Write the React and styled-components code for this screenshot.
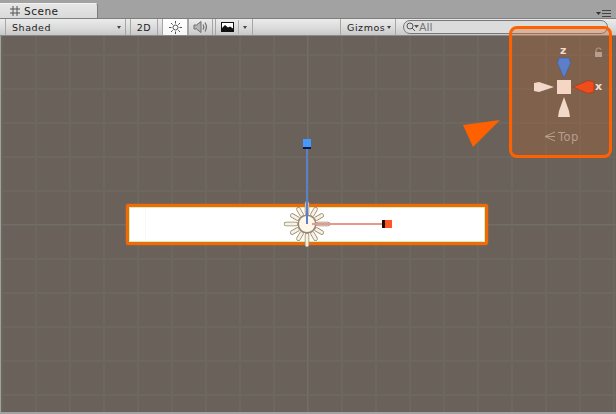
import React from 'react'
import styled, { createGlobalStyle } from 'styled-components'

const Global = createGlobalStyle`
  html, body { margin: 0; padding: 0; background: #a2a2a2; }
  body { font-family: "DejaVu Sans", sans-serif; overflow: hidden; }
`
const Window = styled.div`
  position: relative;
  width: 616px;
  height: 414px;
  display: flex;
  flex-direction: column;
  background: #a2a2a2;
  overflow: hidden;
`
const TabBar = styled.div`
  height: 18px;
  display: flex;
  align-items: flex-end;
  flex: none;
  position: relative;
`
const Tab = styled.div`
  width: 98px;
  height: 15px;
  box-sizing: border-box;
  padding-left: 9px;
  display: flex;
  align-items: center;
  gap: 3px;
  background: linear-gradient(#e6e6e6, #dadada);
  border-top: 1px solid #f2f2f2;
  border-right: 1px solid #7c7c7c;
  border-radius: 0 3px 0 0;
  font-size: 10.5px;
  letter-spacing: 0.5px;
  color: #222;
`
const PaneMenu = styled.svg`
  position: absolute;
  right: 4px;
  bottom: 1px;
`
const Toolbar = styled.div`
  height: 18px;
  flex: none;
  box-sizing: border-box;
  display: flex;
  align-items: stretch;
  padding-left: 5px;
  background: linear-gradient(#ececec, #d9d9d9 60%, #c8c8c8);
  border-top: 1px solid #7f7f7f;
  border-bottom: 1px solid #8a8a8a;
`
const ToolButton = styled.div`
  width: ${p => p.$width}px;
  margin-left: ${p => p.$gap || 0}px;
  box-sizing: border-box;
  display: flex;
  align-items: center;
  gap: ${p => p.$inner || 0}px;
  justify-content: ${p => (p.$left ? 'space-between' : 'center')};
  padding: ${p => (p.$left ? '0 4px 0 6px' : '0')};
  border-left: 1px solid #a6a6a6;
  border-right: 1px solid #a6a6a6;
  background: ${p => (p.$active ? 'linear-gradient(#ffffff, #f6f6f6)' : 'transparent')};
  font-size: 9.5px;
  letter-spacing: 0.55px;
  color: #1d1d1d;
`
const Caret = styled.span`
  width: 0;
  height: 0;
  border-left: 2.5px solid transparent;
  border-right: 2.5px solid transparent;
  border-top: 3px solid #444;
`
const CaretSplit = styled.span`
  height: 14px;
  width: 1px;
  background: #b0b0b0;
`
const Spacer = styled.div`
  flex: 1;
`
const SearchField = styled.div`
  width: 205px;
  height: 14px;
  align-self: center;
  margin: 0 8px 0 7px;
  box-sizing: border-box;
  display: flex;
  align-items: center;
  padding-left: 2px;
  border: 1px solid #777;
  border-radius: 7px;
  background: #dcdcdc;
  font-size: 11px;
  color: #777;
`
const SceneView = styled.div`
  position: relative;
  flex: 1;
  margin: 0 0 2px 1px;
  background-color: #6a625a;
  background-image:
    linear-gradient(#716d67, #716d67),
    linear-gradient(#716d67, #716d67),
    linear-gradient(90deg, #6c675f 2px, transparent 2px),
    linear-gradient(#6c675f 2px, transparent 2px);
  background-size: 1px 100%, 100% 1px, 34px 34px, 34px 34px;
  background-position: 306px 0, 0 188px, 0 18px, 0 18px;
  background-repeat: no-repeat, no-repeat, repeat, repeat;
`
const Selection = styled.div`
  position: absolute;
  left: 125px;
  top: 168px;
  width: 362px;
  height: 41px;
  box-sizing: border-box;
  border: 3px solid #f26a08;
  border-radius: 2px;
  box-shadow: inset 0 0 0 1px #cdf2b8, 0 0 2px 0 rgba(242, 106, 8, 0.8);
  background: linear-gradient(90deg, #fff 16px, #f3faf3 16px, #f3faf3 17px, #fff 17px);
`
const Handles = styled.svg`
  position: absolute;
  left: 0;
  top: 0;
`
const GizmoPanel = styled.div`
  position: absolute;
  left: 509px;
  top: 26px;
  width: 103px;
  height: 132px;
  box-sizing: border-box;
  border: 3px solid #ff6000;
  border-radius: 8px;
  background: rgba(255, 96, 0, 0.15);
`
const ToolbarTint = styled.div`
  height: 7px;
  background: rgba(190, 110, 60, 0.22);
`
const GizmoDrawing = styled.svg`
  position: absolute;
  left: -3px;
  top: -3px;
`
const AxisLabel = styled.span`
  position: absolute;
  left: ${p => p.$x}px;
  top: ${p => p.$y}px;
  font-size: 11px;
  font-weight: bold;
  line-height: 10px;
  color: #f4dccd;
`
const ViewName = styled.span`
  position: absolute;
  left: 46px;
  top: 101px;
  font-size: 11.5px;
  line-height: 14px;
  letter-spacing: 0.5px;
  color: #b89e8e;
`

const rayAngles = Array.from({ length: 12 }, (_, i) => i * 30)

function SunRays() {
  const rays = rayAngles.map(a => {
    const rad = (a * Math.PI) / 180
    const to = a % 90 === 0 ? 21 : 17
    return {
      a,
      x1: 306 + Math.cos(rad) * 11,
      y1: 188 + Math.sin(rad) * 11,
      x2: 306 + Math.cos(rad) * to,
      y2: 188 + Math.sin(rad) * to,
    }
  })
  return (
    <>
      {rays.map(({ a, ...c }) => (
        <line key={a} {...c} stroke="#8f877b" strokeWidth="4.5" strokeLinecap="round" />
      ))}
      {rays.map(({ a, ...c }) => (
        <line key={a} {...c} stroke="#fff0d8" strokeWidth="3" strokeLinecap="round" />
      ))}
    </>
  )
}

export default function App() {
  return (
    <Window>
      <Global />
      <TabBar>
        <Tab>
          <svg width="12" height="12" viewBox="0 0 12 12" stroke="#555" fill="none">
            <path d="M4 1v10M8 1v10M1 4h10M1 8h10" />
          </svg>
          Scene
        </Tab>
        <PaneMenu width="16" height="7" viewBox="0 0 16 7">
          <path d="M0 2h5L2.5 5z" fill="#333" />
          <path d="M6 .5h9M6 3.5h9M6 6.5h9" stroke="#444" />
        </PaneMenu>
      </TabBar>
      <Toolbar>
        <ToolButton $width={121} $left>Shaded<Caret /></ToolButton>
        <ToolButton $width={28} $gap={4}>2D</ToolButton>
        <ToolButton $width={26} $gap={4} $active>
          <svg width="13" height="13" viewBox="0 0 13 13" stroke="#555" fill="none">
            <circle cx="6.5" cy="6.5" r="2.5" />
            <path d="M6.5 0v2.5M6.500 10.500V13M0 6.5h2.500M10.500 6.500H13M2 2l1.700 1.700M9.300 9.300 11 11M2 11l1.700-1.700M9.300 3.700 11 2" />
          </svg>
        </ToolButton>
        <ToolButton $width={25}>
          <svg width="15" height="14" viewBox="0 0 15 14" fill="none">
            <path d="M1 5h2.500L8 1.500v11L3.500 9H1z" fill="#b5b5b5" stroke="#6f6f6f" />
            <path d="M10 4.500q1.500 2.500 0 5M12 2.500q2.800 4.500 0 9" stroke="#6f6f6f" strokeWidth="1.200" />
          </svg>
        </ToolButton>
        <ToolButton $width={38} $gap={2} $inner={4}>
          <svg width="13" height="10" viewBox="0 0 13 10">
            <rect x=".5" y=".5" width="12" height="9" fill="#fff" stroke="#111" />
            <path d="M1 9V6l3-3 3 2.500 2-1 3 2v3z" fill="#111" />
          </svg>
          <CaretSplit />
          <Caret />
        </ToolButton>
        <Spacer />
        <ToolButton $width={56} $left>Gizmos<Caret /></ToolButton>
        <SearchField>
          <svg width="13" height="10" viewBox="0 0 13 10" fill="none">
            <circle cx="4" cy="4" r="3" stroke="#555" />
            <path d="M6 6l3 3" stroke="#555" />
            <path d="M8 3h5l-2.500 3z" fill="#555" />
          </svg>
          All
        </SearchField>
      </Toolbar>
      <SceneView>
        <Selection />
        <Handles width="615" height="376" viewBox="0 0 615 376">
          <SunRays />
          <circle cx="306" cy="188" r="9.500" fill="#8f877b" />
          <circle cx="306" cy="188" r="8" fill="#fff6e8" />
          <path d="M306 112v76" stroke="#5b7fc9" strokeWidth="2" />
          <rect x="302" y="103" width="8" height="8" fill="#4499ff" />
          <rect x="302" y="111" width="8" height="2" fill="#0a1a40" />
          <path d="M311 188h71" stroke="#e9988a" strokeWidth="2" />
          <rect x="381" y="184" width="3" height="8" fill="#1a0d08" />
          <rect x="384" y="184" width="7" height="8" fill="#ff5522" />
          <polygon points="462,89 499,84 472,111" fill="#ff6000" />
        </Handles>
      </SceneView>
      <GizmoPanel>
        <ToolbarTint />
        <GizmoDrawing width="103" height="132" viewBox="0 0 103 132">
          <polygon points="50,32 60,32 61.500,37 55,52 48.500,37" fill="#5b7fc9" stroke="#3f5fa8" strokeWidth=".6" />
          <polygon points="85,56 85,66 79,67.500 64,61 79,54.500" fill="#f04c1c" stroke="#a83010" strokeWidth=".6" />
          <polygon points="25,57 25,65 30,66 45,61 30,56" fill="#f2d8c8" />
          <polygon points="55,71 60,85 61,91 49,91 50,85" fill="#f2d8c8" />
          <rect x="48" y="54" width="14" height="14" fill="#f5d5c3" />
          <path d="M46 106l-10 4.500 10 4.500M36 110.500h10" stroke="#b89e8e" fill="none" />
          <rect x="86" y="26" width="7" height="5" fill="#b89e8e" />
          <path d="M87 26v-2q0-2 2.500-2t2.500 2" stroke="#b89e8e" fill="none" />
        </GizmoDrawing>
        <AxisLabel $x={48} $y={17}>z</AxisLabel>
        <AxisLabel $x={83} $y={53}>x</AxisLabel>
        <ViewName>Top</ViewName>
      </GizmoPanel>
    </Window>
  )
}
